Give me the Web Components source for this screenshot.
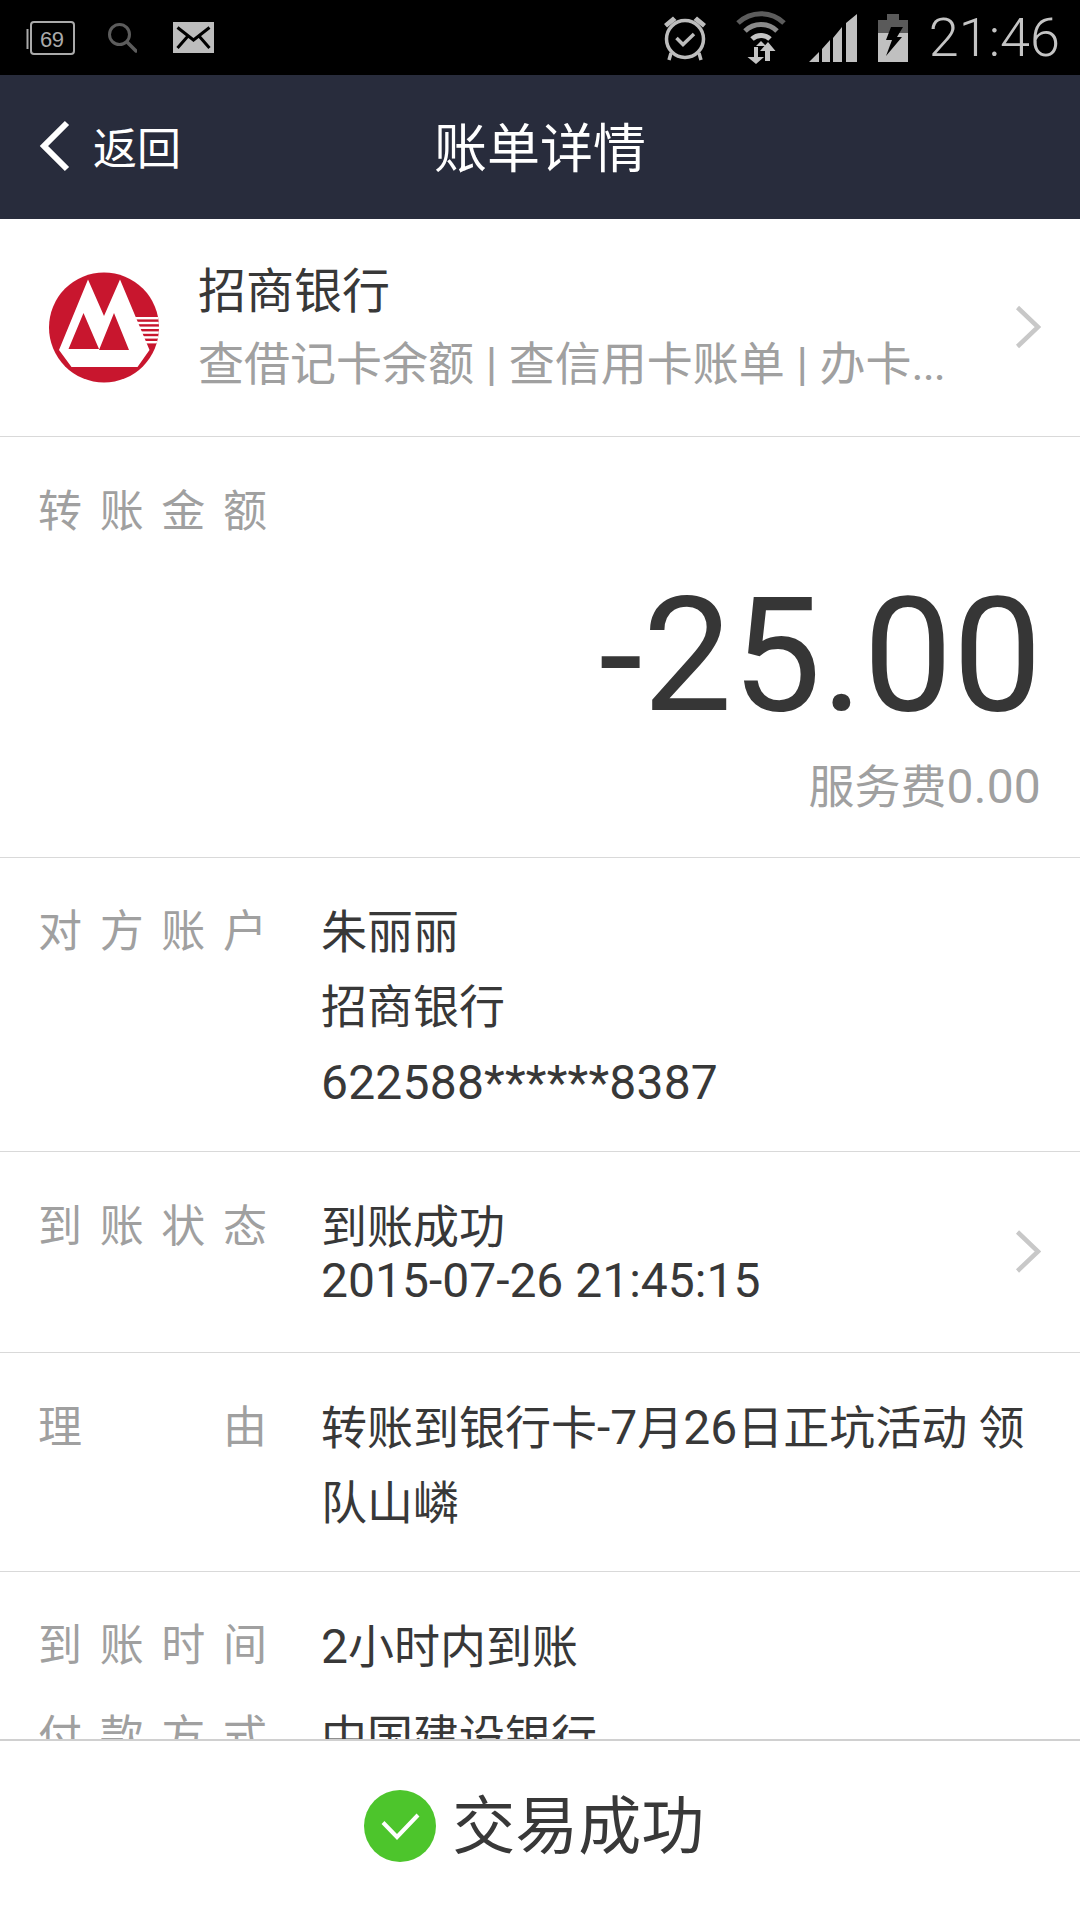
<!DOCTYPE html>
<html><head><meta charset="utf-8"><style>
html,body{margin:0;padding:0;background:#fff}
body{width:1080px;height:1920px;overflow:hidden;font-family:Roboto,"Noto Sans CJK SC",sans-serif;color:#383838}
.d{font-size:48px}
.w{letter-spacing:.2px}
</style></head><body>
<bill-app>
<status-bar slot="status"></status-bar>
<nav-bar slot="nav" back="返回" title-text="账单详情"></nav-bar>
<bank-card slot="content" name="招商银行" sub="查借记卡余额 | 查信用卡账单 | 办卡..."></bank-card>
<amount-block slot="content" label="转账金额" amount="-25.00" fee="服务费" fee-num="0.00"></amount-block>
<bill-row slot="content" label="对方账户" pad="37px 31px" lh="75px"><div>朱丽丽</div><div>招商银行</div><div class="d w">622588******8387</div></bill-row>
<bill-row slot="content" label="到账状态" pad="48px 44px" lh="54px" chevron><div>到账成功</div><div class="d">2015-07-26 21:45:15</div></bill-row>
<bill-row slot="content" label="理由" pad="38px 31px" lh="74.500px"><div>转账到银行卡<span class="d">-7</span>月<span class="d">26</span>日正坑活动 领</div><div>队山嶙</div></bill-row>
<bill-row slot="content" label="到账时间" pad="37px 0 0" lh="75px" noline><div><span class="d">2</span>小时内到账</div></bill-row>
<bill-row slot="content" label="付款方式" pad="15px 0 0" lh="75px" noline><div>中国建设银行</div></bill-row>
<result-bar slot="footer" text="交易成功"></result-bar>
</bill-app>
<script>
function def(name,html){customElements.define(name,class extends HTMLElement{connectedCallback(){if(this.shadowRoot)return;const s=this.attachShadow({mode:'open'});s.innerHTML=typeof html==='function'?html(this):html;}});}
const chev='<svg width="26" height="44" viewBox="0 0 26 44"><path d="M2.5 2.5 L23 22 L2.5 41.5" fill="none" stroke="#c8c8c8" stroke-width="4.5"/></svg>';
def('bill-app',`<style>:host{display:flex;flex-direction:column;width:1080px;height:1920px;overflow:hidden}
.c{flex:1;min-height:0;overflow:hidden}</style>
<slot name="status"></slot><slot name="nav"></slot><div class="c"><slot name="content"></slot></div><slot name="footer"></slot>`);
def('status-bar',`<style>:host{display:flex;align-items:center;height:75px;background:#000;color:#bdbdbd;box-sizing:border-box}
svg{display:block;flex:none}.t{font:300 54px/75px Roboto,sans-serif;margin-left:21px;color:#c4c4c4}
.sp{flex:1}</style>
<svg style="margin-left:26px" width="50" height="36" viewBox="0 0 50 36"><path d="M1.500 9V29" stroke="#aaa" stroke-width="2"/><rect x="5" y="2" width="43" height="32" rx="3" fill="none" stroke="#aaa" stroke-width="2"/><text x="14" y="27" font-family="Liberation Sans" font-size="22" fill="#aaa" textLength="24">69</text></svg>
<svg style="margin-left:31px" width="30" height="32" viewBox="0 0 30 32"><circle cx="12.500" cy="12.500" r="10" fill="none" stroke="#5c5c5c" stroke-width="3"/><path d="M20 20L29 29" stroke="#5c5c5c" stroke-width="3.500" stroke-linecap="round"/></svg>
<svg style="margin-left:36px" width="41" height="31" viewBox="0 0 41 31"><rect width="41" height="31" fill="#bdbdbd"/><path d="M4.500 5.500L20.500 18 36.500 5.500M4.500 26L15 14M36.500 26L26 14" fill="none" stroke="#000" stroke-width="3"/></svg>
<div class="sp"></div>
<svg width="46" height="48" viewBox="0 0 46 48"><path d="M2 10L11 2.500 14.500 6 5 13.500ZM44 10L35 2.500 31.500 6 41 13.500Z" fill="#bdbdbd"/><circle cx="23" cy="25" r="18.500" fill="none" stroke="#bdbdbd" stroke-width="3.500"/><path d="M14.500 24L21 30.500 32 20" fill="none" stroke="#bdbdbd" stroke-width="3.500"/><path d="M9 39L7 46M37 39L39 46" stroke="#bdbdbd" stroke-width="3.500"/></svg>
<svg style="margin-left:28px" width="50" height="54" viewBox="0 0 50 54"><path d="M2 12A33 33 0 0 1 48 12" fill="none" stroke="#5c5c5c" stroke-width="5"/><path d="M9 20A23 23 0 0 1 41 20" fill="none" stroke="#8a8a8a" stroke-width="5"/><path d="M16 28A13 13 0 0 1 34 28" fill="none" stroke="#c4c4c4" stroke-width="5"/><path d="M25 30L20 35H30Z" fill="#c4c4c4"/><path d="M18 36V46H11.500L20 53 28 46H22V36ZM32 31L24 40H29V50H34V40H39.500Z" fill="#c4c4c4"/></svg>
<svg style="margin-left:23px" width="49" height="48" viewBox="0 0 49 48"><path d="M0 48L10 38V48ZM13 35L21 26V48H13ZM24 24L33 13V48H24ZM37 9L48 0V48H37Z" fill="#c0c0c0"/></svg>
<svg style="margin-left:20px" width="30" height="48" viewBox="0 0 30 48"><path d="M9 0H21V6H30V48H0V6H9Z" fill="#c0c0c0"/><path d="M9 0H21V6H30V19H0V6H9Z" fill="#5a5a5a"/><path d="M13 13H25L19 23H24L8 42 14 26H8Z" fill="#000"/></svg>
<div class="t" style="margin-right:20px">21:46</div>`);
def('nav-bar',h=>`<style>:host{display:flex;align-items:center;position:relative;height:144px;background:#282c3c;color:#fff;justify-content:center}
.b{position:absolute;left:38px;top:-1px;height:144px;display:flex;align-items:center;gap:23px;font-size:44px}
svg{display:block;margin-left:1px}.t{font-size:53px;position:relative;top:-2px}</style>
<div class="b"><svg width="32" height="52" viewBox="0 0 32 52"><path d="M28 3L5 26 28 49" fill="none" stroke="#fff" stroke-width="6"/></svg><span style="margin-left:-1px">${h.getAttribute('back')}</span></div>
<div class="t">${h.getAttribute('title-text')}</div>`);
def('bank-card',h=>`<style>:host{display:flex;align-items:center;height:218px;box-sizing:border-box;border-bottom:1px solid #d9d9d9;padding-left:49px;padding-right:39px}
.l{display:block;flex:none;margin-right:39px}.m{flex:1;min-width:0}
.n{font-size:48px;line-height:64px;color:#383838}.s{font-size:46px;line-height:64px;color:#a0a0a0;white-space:nowrap;margin-top:8px}
.s span{font-size:47px}.s i{font-style:normal;letter-spacing:-1px}
.ch{flex:none;position:relative;top:1px}</style>
<svg class="l" width="110" height="111" viewBox="0 0 110 111"><defs><clipPath id="c"><circle cx="55" cy="55.500" r="55"/></clipPath></defs><circle cx="55" cy="55.500" r="55" fill="#c8162e"/>
<path d="M39 7.500L55 44 71 7.500 100.500 78 88.500 95H22.500L10 78Z" fill="#fff"/><path d="M34.500 41L50 77H19.500ZM65 41L80 78H50Z" fill="#c8162e"/>
<g clip-path="url(#c)" fill="#fff"><rect x="85" y="45" width="26" height="2.400"/><rect x="85" y="49.800" width="26" height="2.400"/><rect x="85" y="54.600" width="26" height="2.400"/><rect x="85" y="59.400" width="26" height="2.400"/><rect x="85" y="64.200" width="26" height="2.400"/><rect x="85" y="69" width="26" height="2.400"/></g></svg>
<div class="m"><div class="n">${h.getAttribute('name')}</div><div class="s">${h.getAttribute('sub').replace(/ \| /g,'<span> | </span>').replace('...','<i>...</i>')}</div></div><div class="ch">${chev}</div>`);
const lab=t=>[...t].map(c=>`<span>${c}</span>`).join('');
def('amount-block',h=>`<style>:host{display:block;height:421px;box-sizing:border-box;border-bottom:1px solid #d9d9d9;padding:45px 39px 0 38px}
.l{display:flex;justify-content:space-between;width:229px;font-size:44px;line-height:60px;color:#a0a0a0}
.a{font-size:159px;line-height:180px;text-align:right;margin-top:24px;margin-right:-1px;color:#363636}
.f{font-size:46px;line-height:60px;text-align:right;color:#a0a0a0;margin-top:11px}.f b{font-weight:400;font-size:48px;letter-spacing:.2px}</style>
<div class="l">${lab(h.getAttribute('label'))}</div><div class="a">${h.getAttribute('amount')}</div><div class="f">${h.getAttribute('fee')}<b>${h.getAttribute('fee-num')}</b></div>`);
def('bill-row',h=>{const p=h.getAttribute('pad').split(' ');return `<style>:host{display:flex;align-items:flex-start;box-sizing:border-box;padding:${p[0]} 39px ${p[1]||0} 38px;${h.hasAttribute('noline')?'':'border-bottom:1px solid #d9d9d9;'}font-size:46px;line-height:${h.getAttribute('lh')};position:relative}
.l{flex:none;display:flex;justify-content:space-between;width:229px;margin-right:54px;font-size:44px;color:#a0a0a0}
.v{flex:1;min-width:0;color:#383838;padding-right:${h.hasAttribute('chevron')?40:0}px}
.ch{position:absolute;right:39px;top:calc(50% + 5px);transform:translateY(-50%)}</style>
<div class="l">${lab(h.getAttribute('label'))}</div><div class="v"><slot></slot></div>${h.hasAttribute('chevron')?`<div class="ch">${chev}</div>`:''}`});
def('result-bar',h=>`<style>:host{display:flex;align-items:center;justify-content:center;gap:16.500px;height:181px;box-sizing:border-box;border-top:2px solid #d0d0d0;background:#fff;font-size:63px;color:#383838;padding:0 12px 9px 0}svg{display:block}span{position:relative;top:-6px}</style>
<svg width="72" height="72" viewBox="0 0 72 72"><circle cx="36" cy="36" r="36" fill="#4dc52c"/><path d="M19 32.500L33 47 54 25" fill="none" stroke="#fff" stroke-width="4"/></svg><span>${h.getAttribute('text')}</span>`);
</script>
</body></html>
